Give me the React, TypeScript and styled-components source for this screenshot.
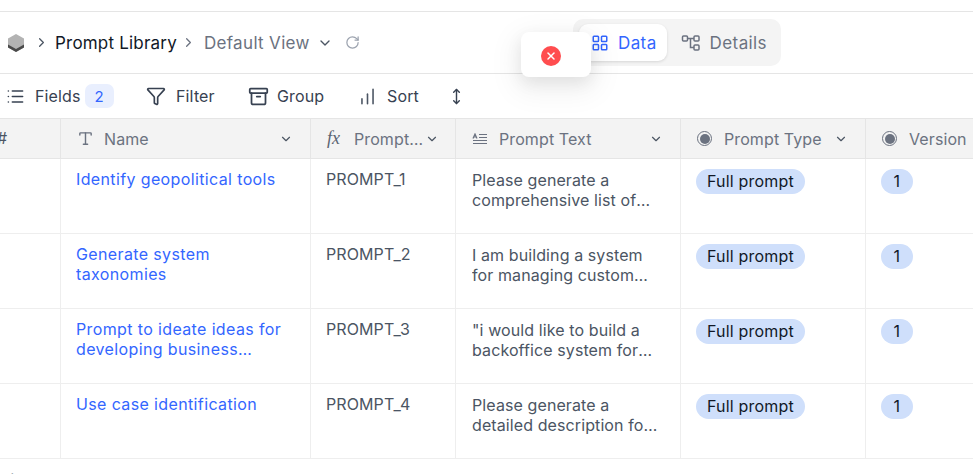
import React from 'react';
import styled, { createGlobalStyle } from 'styled-components';
import {
  Archive,
  ChartNoAxesColumnIncreasing,
  ChevronDown,
  ChevronRight,
  Funnel,
  LayoutGrid,
  List,
  MoveVertical,
  RotateCw,
  Type,
  X,
} from 'lucide-react';

const COLUMNS = '61px 250px 145px 225px 185px 140px';

const GlobalStyle = createGlobalStyle`
  html, body {
    margin: 0;
    padding: 0;
    background: #fff;
    overflow: hidden;
  }
  body {
    font-family: Inter, 'Liberation Sans', sans-serif;
    color: #1f2937;
  }
`;

const Page = styled.div`
  position: relative;
  width: 973px;
  height: 474px;
  overflow: hidden;
  padding-top: 11px;
  box-sizing: border-box;
`;

const Header = styled.header`
  height: 61px;
  display: flex;
  align-items: center;
  padding-left: 6px;
  border-top: 1px solid #e5e5e5;
  border-bottom: 1px solid #e5e5e5;
`;

const Crumbs = styled.div`
  display: flex;
  align-items: center;
  width: 567px;
`;

const CrumbTitle = styled.span`
  font-size: 17px;
  letter-spacing: 0.2px;
  color: #111827;
  margin: 0 4px 0 6px;
`;

const CrumbView = styled.span`
  font-size: 17px;
  letter-spacing: 0.33px;
  color: #6b7280;
  margin: 0 7px 0 8px;
`;

const ViewTabs = styled.div`
  display: flex;
  align-items: center;
  gap: 2px;
  width: 208px;
  height: 47px;
  box-sizing: border-box;
  padding: 0 6px;
  margin-top: -1px;
  border-radius: 10px;
  background: #f4f4f4;
`;

const ViewTab = styled.div<{ $active?: boolean }>`
  display: flex;
  align-items: center;
  gap: 9px;
  height: 37px;
  box-sizing: border-box;
  padding: 2px 10px 0 12px;
  border-radius: 9px;
  font-size: 17px;
  letter-spacing: 0.4px;
  color: ${(p) => (p.$active ? '#3366ff' : '#6b7280')};
  background: ${(p) => (p.$active ? '#fff' : 'transparent')};
  box-shadow: ${(p) => (p.$active ? '0 1px 3px rgba(0,0,0,0.12)' : 'none')};
`;

const Toolbar = styled.div`
  height: 44px;
  display: flex;
  align-items: center;
  padding-left: 6px;
  font-size: 16px;
  letter-spacing: 0.15px;
  color: #374151;
`;

const ToolButton = styled.div<{ $width: number; $gap?: number }>`
  display: flex;
  align-items: center;
  gap: ${(p) => p.$gap ?? 10}px;
  width: ${(p) => p.$width}px;
`;

const CountBadge = styled.span`
  display: inline-flex;
  align-items: center;
  justify-content: center;
  width: 29px;
  height: 24px;
  margin-left: -6px;
  border-radius: 7px;
  background: #e9effe;
  color: #3366ff;
  font-size: 15px;
`;

const Row = styled.div<{ $head?: boolean }>`
  display: grid;
  grid-template-columns: ${COLUMNS};
  height: ${(p) => (p.$head ? '39px' : '74px')};
  background: ${(p) => (p.$head ? '#f3f3f3' : '#fff')};
  border-top: ${(p) => (p.$head ? '1px solid #e5e5e5' : 'none')};
  border-bottom: 1px solid ${(p) => (p.$head ? '#e5e5e5' : '#eeeeee')};
`;

const HeadCell = styled.div<{ $gap?: number; $padRight?: number }>`
  display: flex;
  align-items: center;
  gap: ${(p) => p.$gap ?? 10}px;
  padding: 0 ${(p) => p.$padRight ?? 17}px 0 16px;
  border-right: 1px solid #e5e5e5;
  font-size: 16px;
  letter-spacing: 0.1px;
  color: #6b7280;
  min-width: 0;
  white-space: nowrap;

  &:last-child {
    border-right: none;
  }
`;

const HeadLabel = styled.span`
  flex: 1;
  min-width: 0;
  overflow: hidden;
  text-overflow: ellipsis;
`;

const Hash = styled.span`
  margin-left: -19px;
  margin-top: -1px;
  color: #4b5563;
`;

const FxMark = styled.span`
  font-family: 'Liberation Serif', serif;
  font-style: italic;
  font-size: 18px;
  width: 17px;
  margin-right: 9px;
  flex: none;
  color: #5b6472;
`;

const RadioMark = styled.span`
  width: 15px;
  height: 15px;
  flex: none;
  box-sizing: border-box;
  border: 1.5px solid #6b7280;
  border-radius: 50%;
  padding: 1.5px;

  &::after {
    content: '';
    display: block;
    width: 100%;
    height: 100%;
    border-radius: 50%;
    background: #6b7280;
  }
`;

const Cell = styled.div<{ $padLeft?: number; $padRight?: number }>`
  padding: 10px ${(p) => p.$padRight ?? 16}px 0 ${(p) => p.$padLeft ?? 15}px;
  border-right: 1px solid #eeeeee;
  font-size: 16px;
  line-height: 20px;
  min-width: 0;

  &:last-child {
    border-right: none;
  }
`;

const NameLink = styled.a`
  display: -webkit-box;
  -webkit-box-orient: vertical;
  -webkit-line-clamp: 2;
  overflow: hidden;
  letter-spacing: 0.37px;
  color: #3366ff;
  text-decoration: none;
`;

const CodeText = styled.span`
  letter-spacing: 0.1px;
  color: #4b5563;
`;

const PromptText = styled.div`
  display: -webkit-box;
  -webkit-box-orient: vertical;
  -webkit-line-clamp: 2;
  overflow: hidden;
  margin-top: 1px;
  letter-spacing: 0.1px;
  color: #4b5563;
`;

const Pill = styled.span`
  display: inline-block;
  height: 25px;
  line-height: 25px;
  padding: 0 11px;
  border-radius: 13px;
  background: #cfdffb;
  letter-spacing: 0.2px;
  color: #111827;
`;

const VersionPill = styled(Pill)`
  padding: 0 12.5px;
`;

const Footer = styled.div`
  padding: 7px 0 0 7px;
  font-size: 16px;
  line-height: 20px;
  color: #4b5563;
`;

const Toast = styled.div`
  position: absolute;
  left: 521px;
  top: 32px;
  width: 70px;
  height: 45px;
  display: flex;
  align-items: center;
  justify-content: center;
  padding: 2px 10px 0 0;
  box-sizing: border-box;
  border-radius: 8px;
  background: #fff;
  box-shadow: 0 6px 16px rgba(0, 0, 0, 0.08), 0 9px 28px 8px rgba(0, 0, 0, 0.05);
`;

const ToastIcon = styled.span`
  width: 20px;
  height: 20px;
  display: flex;
  align-items: center;
  justify-content: center;
  border-radius: 50%;
  background: #ff4d4f;
  color: #fff;
`;

const rows = [
  {
    name: 'Identify geopolitical tools',
    code: 'PROMPT_1',
    text: 'Please generate a comprehensive list of geopolitical tools used by states',
  },
  {
    name: 'Generate system taxonomies',
    code: 'PROMPT_2',
    text: 'I am building a system for managing custom applications and their records',
  },
  {
    name: 'Prompt to ideate ideas for developing business applications and tools',
    code: 'PROMPT_3',
    text: '"i would like to build a backoffice system for our whole company',
  },
  {
    name: 'Use case identification',
    code: 'PROMPT_4',
    text: 'Please generate a detailed description for each of the use cases',
  },
];

const CubeLogo = () => (
  <svg width="20" height="20" viewBox="0 0 20 20">
    <path d="M10 1 18 5.500v9L10 19l-8-4.500v-9z" fill="#b3b3b3" />
    <path d="M2 11.500 10 16l8-4.500v3L10 19l-8-4.500z" fill="#4a4a4a" />
  </svg>
);

const DetailsIcon = () => (
  <svg width="20" height="20" viewBox="0 0 20 20" fill="none" stroke="#6b7280" strokeWidth="1.5">
    <rect x="1.500" y="3" width="5" height="5" rx="1" />
    <rect x="13" y="3" width="5" height="5" rx="1" />
    <rect x="13" y="12" width="5" height="5" rx="1" />
    <path d="M6.500 5.500H13M9.500 5.500v9H13" />
  </svg>
);

const LongTextIcon = () => (
  <svg width="16" height="12" viewBox="0 0 16 12" fill="none" stroke="#6b7280" strokeWidth="1.2">
    <path d="M1 5.500 3 1l2 4.500M1.800 4h2.400M7 1.500h8M7 4.500h8M1 7.500h14M1 10.500h14" />
  </svg>
);

const App = () => {
  return (
    <Page>
      <GlobalStyle />
      <Header>
        <Crumbs>
          <CubeLogo />
          <ChevronRight size={15} color="#4b5563" style={{ marginLeft: 8 }} />
          <CrumbTitle>Prompt Library</CrumbTitle>
          <ChevronRight size={15} color="#6b7280" />
          <CrumbView>Default View</CrumbView>
          <ChevronDown size={16} color="#4b5563" />
          <RotateCw size={15} color="#9ca3af" style={{ marginLeft: 12 }} />
        </Crumbs>
        <ViewTabs>
          <ViewTab $active>
            <LayoutGrid size={18} />
            Data
          </ViewTab>
          <ViewTab>
            <DetailsIcon />
            Details
          </ViewTab>
        </ViewTabs>
      </Header>
      <Toolbar>
        <ToolButton $width={140}>
          <List size={19} color="#374151" />
          Fields
          <CountBadge>2</CountBadge>
        </ToolButton>
        <ToolButton $width={102}>
          <Funnel size={20} color="#374151" />
          Filter
        </ToolButton>
        <ToolButton $width={110} $gap={8}>
          <Archive size={21} color="#374151" />
          Group
        </ToolButton>
        <ToolButton $width={90}>
          <ChartNoAxesColumnIncreasing size={19} color="#4b5563" />
          Sort
        </ToolButton>
        <MoveVertical size={17} color="#374151" />
      </Toolbar>
      <Row $head>
        <HeadCell>
          <Hash>#</Hash>
        </HeadCell>
        <HeadCell>
          <Type size={17} color="#6b7280" />
          <HeadLabel>Name</HeadLabel>
          <ChevronDown size={14} color="#4b5563" />
        </HeadCell>
        <HeadCell $gap={1} $padRight={16}>
          <FxMark>fx</FxMark>
          <HeadLabel>Prompt ID</HeadLabel>
          <ChevronDown size={14} color="#4b5563" />
        </HeadCell>
        <HeadCell $gap={11}>
          <LongTextIcon />
          <HeadLabel>Prompt Text</HeadLabel>
          <ChevronDown size={14} color="#4b5563" />
        </HeadCell>
        <HeadCell $gap={12}>
          <RadioMark />
          <HeadLabel>Prompt Type</HeadLabel>
          <ChevronDown size={14} color="#4b5563" />
        </HeadCell>
        <HeadCell $gap={12}>
          <RadioMark />
          <HeadLabel>Version</HeadLabel>
        </HeadCell>
      </Row>
      {rows.map((row) => (
        <Row key={row.code}>
          <Cell />
          <Cell>
            <NameLink href="#">{row.name}</NameLink>
          </Cell>
          <Cell>
            <CodeText>{row.code}</CodeText>
          </Cell>
          <Cell $padLeft={16} $padRight={22}>
            <PromptText>{row.text}</PromptText>
          </Cell>
          <Cell>
            <Pill>Full prompt</Pill>
          </Cell>
          <Cell>
            <VersionPill>1</VersionPill>
          </Cell>
        </Row>
      ))}
      <Footer>+</Footer>
      <Toast>
        <ToastIcon>
          <X size={12} strokeWidth={3} />
        </ToastIcon>
      </Toast>
    </Page>
  );
};

export default App;
